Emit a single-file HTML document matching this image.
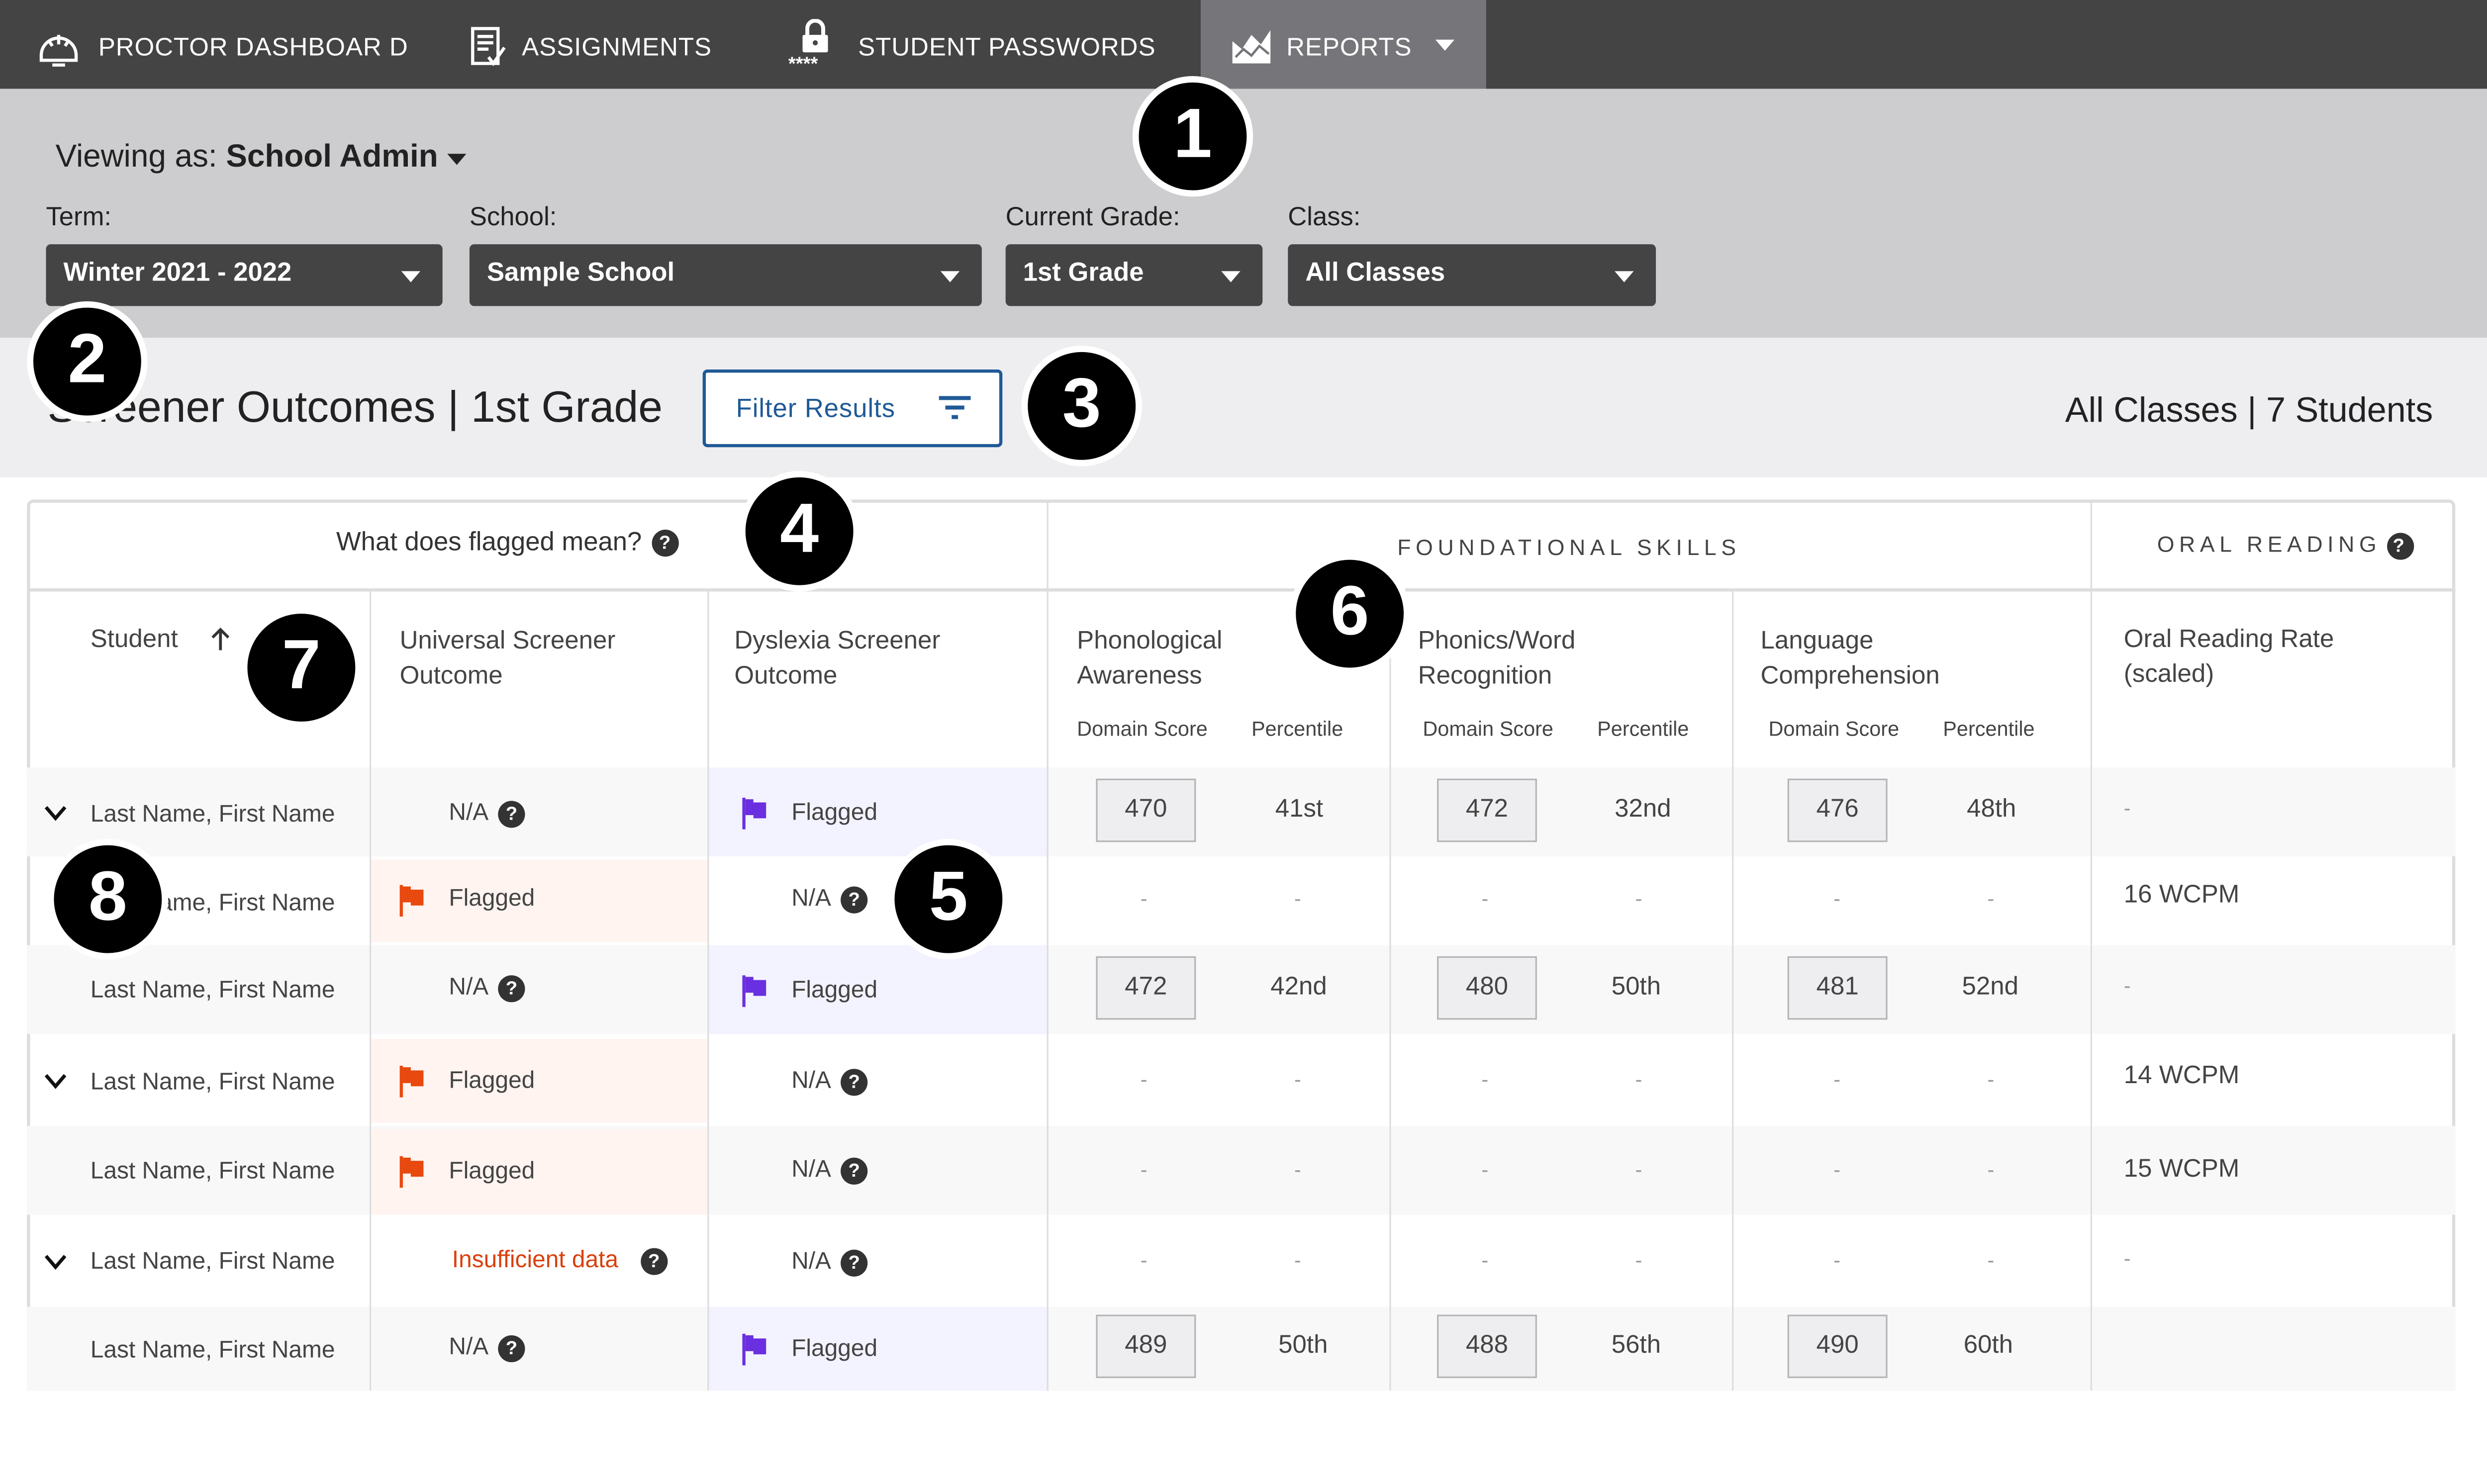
<!DOCTYPE html>
<html><head><meta charset="utf-8"><style>
*{margin:0;padding:0;box-sizing:border-box}
html,body{width:100vw;height:100vh;overflow:hidden;background:#fff}
#w{position:absolute;left:0;top:0;width:1568px;height:877px;overflow:hidden;transform:scale(3.4018);transform-origin:0 0;font-family:"Liberation Sans",sans-serif;color:#333;font-size:15px}
.a{position:absolute;white-space:nowrap}
.nav{left:0;top:0;width:1568px;height:56px;background:#444}
.nt{color:#fff;font-size:16px;top:22px;letter-spacing:.3px}
.dd{background:#444;border-radius:3px;height:39px;top:154px;color:#fff;font-weight:bold;font-size:16.5px;padding:9px 11px}
.dd:after{content:"";position:absolute;right:14px;top:17px;border:6px solid transparent;border-top:7px solid #fff}
.lbl{top:128px;font-size:16.5px;color:#222}
.c{width:76px;height:76px;border-radius:50%;background:#000;border:4px solid #fff;color:#fff;font-weight:bold;font-size:44px;text-align:center;line-height:66px;z-index:5}
.vl{width:1px;background:#ddd}
.hl{height:1px;background:#ddd}
.q{display:inline-block;width:17px;height:17px;border-radius:50%;background:#333;color:#fff;font-size:12px;font-weight:bold;text-align:center;line-height:17px;vertical-align:middle;margin-left:6px}
.sb{width:63px;height:40px;background:#eeeef0;border:1px solid #b5b5b8;text-align:center;line-height:38px;font-size:16px;color:#444}
.nm{font-size:15px;color:#444}
.fl{width:16px;height:20px}
.t16{font-size:16px;color:#444}
.dash{color:#999;font-size:13px}
</style></head><body><div id="w">
<div class="a nav"></div>
<div class="a" style="left:757px;top:0;width:180px;height:56px;background:#76767a"></div>
<svg class="a" style="left:22px;top:14px" width="30" height="30" viewBox="0 0 30 30"><path d="M4 21a11 11 0 1 1 22 0v3H4z" fill="none" stroke="#fff" stroke-width="2"/><path d="M15 8v6M9 12l2 3M21 12l-2 3" stroke="#fff" stroke-width="2"/><rect x="11" y="26" width="8" height="2" fill="#fff"/></svg>
<div class="a nt" style="left:62px">PROCTOR DASHBOAR D</div>
<svg class="a" style="left:296px;top:16px" width="24" height="28" viewBox="0 0 24 28"><path d="M2 2h16v22H2z" fill="none" stroke="#fff" stroke-width="2"/><path d="M5 7h10M5 11h10M5 15h7M12 20l3 4 7-10" fill="none" stroke="#fff" stroke-width="2"/></svg>
<div class="a nt" style="left:329px">ASSIGNMENTS</div>
<svg class="a" style="left:505px;top:12px" width="18" height="22" viewBox="0 0 18 22"><path d="M4 10V6a5 5 0 0 1 10 0v4" fill="none" stroke="#fff" stroke-width="2.5"/><rect x="1" y="10" width="16" height="11" rx="1" fill="#fff"/><circle cx="9" cy="15" r="1.6" fill="#444"/></svg>
<div class="a" style="left:497px;top:33px;color:#fff;font-size:12px;font-weight:bold">****</div>
<div class="a nt" style="left:541px">STUDENT PASSWORDS</div>
<svg class="a" style="left:776px;top:18px" width="26" height="22" viewBox="0 0 26 22"><path d="M1 22V8l6 5 6-9 6 6 6-9v21z" fill="#fff"/><path d="M3 18l5-5 5 4 5-6 6 5" fill="none" stroke="#76767a" stroke-width="1.5"/></svg>
<div class="a nt" style="left:811px">REPORTS</div>
<div class="a" style="left:905px;top:25px;border:6px solid transparent;border-top:7px solid #fff"></div>

<div class="a" style="left:0;top:56px;width:1568px;height:157px;background:#cdcdcf"></div>
<div class="a" style="left:35px;top:88px;font-size:20px;color:#222">Viewing as: <b>School Admin</b></div>
<div class="a" style="left:282px;top:97px;border:6px solid transparent;border-top:7px solid #222"></div>
<div class="a lbl" style="left:29px">Term:</div>
<div class="a lbl" style="left:296px">School:</div>
<div class="a lbl" style="left:634px">Current Grade:</div>
<div class="a lbl" style="left:812px">Class:</div>
<div class="a dd" style="left:29px;width:250px">Winter 2021 - 2022</div>
<div class="a dd" style="left:296px;width:323px">Sample School</div>
<div class="a dd" style="left:634px;width:162px">1st Grade</div>
<div class="a dd" style="left:812px;width:232px">All Classes</div>

<div class="a" style="left:0;top:213px;width:1568px;height:88px;background:#eeeef0"></div>
<div class="a" style="left:30px;top:241px;font-size:27.5px;color:#222">Screener Outcomes | 1st Grade</div>
<div class="a" style="left:443px;top:233px;width:189px;height:49px;border:2px solid #1f5a96;border-radius:3px;background:#fff;color:#1f5a96;font-size:16.5px;padding:14px 0 0 19px;letter-spacing:.3px">Filter Results</div>
<svg class="a" style="left:591px;top:249px" width="22" height="18" viewBox="0 0 22 18"><path d="M1 2h20M5 8h12M9 14h4" stroke="#1f5a96" stroke-width="2.5"/></svg>
<div class="a" style="left:1302px;top:246px;font-size:22px;color:#222">All Classes | 7 Students</div>

<!-- table -->
<div class="a" style="left:17px;top:315px;width:1531px;height:640px;border:2px solid #ddd;border-radius:4px"></div>
<div class="a hl" style="left:17px;top:371px;width:1531px;height:2px"></div>
<div class="a" style="left:17px;top:484px;width:1531px;height:56px;background:#f8f8f8"></div>
<div class="a" style="left:17px;top:596px;width:1531px;height:56px;background:#f8f8f8"></div>
<div class="a" style="left:17px;top:710px;width:1531px;height:56px;background:#f8f8f8"></div>
<div class="a" style="left:17px;top:824px;width:1531px;height:60px;background:#f8f8f8"></div>
<div class="a" style="left:234px;top:542px;width:212px;height:52px;background:#fff4f0"></div>
<div class="a" style="left:234px;top:655px;width:212px;height:53px;background:#fff4f0"></div>
<div class="a" style="left:234px;top:712px;width:212px;height:54px;background:#fff4f0"></div>
<div class="a" style="left:447px;top:484px;width:213px;height:56px;background:#f3f2ff"></div>
<div class="a" style="left:447px;top:596px;width:213px;height:56px;background:#f3f2ff"></div>
<div class="a" style="left:447px;top:824px;width:213px;height:60px;background:#f3f2ff"></div>
<div class="a vl" style="left:233px;top:372px;height:520px"></div>
<div class="a vl" style="left:446px;top:372px;height:520px"></div>
<div class="a vl" style="left:660px;top:316px;height:576px"></div>
<div class="a vl" style="left:876px;top:372px;height:520px"></div>
<div class="a vl" style="left:1092px;top:372px;height:520px"></div>
<div class="a vl" style="left:1318px;top:316px;height:576px"></div>

<div class="a" style="left:212px;top:333px;font-size:16.5px;color:#333">What does flagged mean?<span class="q">?</span></div>
<div class="a" style="left:881px;top:337px;font-size:14px;letter-spacing:3px;color:#444">FOUNDATIONAL SKILLS</div>
<div class="a" style="left:1360px;top:335px;font-size:14px;letter-spacing:3px;color:#444">ORAL READING<span class="q" style="margin-left:4px">?</span></div>

<div class="a t16" style="left:57px;top:395px">Student</div>
<svg class="a" style="left:132px;top:395px" width="14" height="16" viewBox="0 0 14 16"><path d="M7 15V2M2 7l5-5 5 5" fill="none" stroke="#333" stroke-width="1.8"/></svg>
<div class="a t16" style="left:252px;top:394px;line-height:22px">Universal Screener<br>Outcome</div>
<div class="a t16" style="left:463px;top:394px;line-height:22px">Dyslexia Screener<br>Outcome</div>
<div class="a t16" style="left:679px;top:394px;line-height:22px">Phonological<br>Awareness</div>
<div class="a t16" style="left:894px;top:394px;line-height:22px">Phonics/Word<br>Recognition</div>
<div class="a t16" style="left:1110px;top:394px;line-height:22px">Language<br>Comprehension</div>
<div class="a t16" style="left:1339px;top:393px;line-height:22px">Oral Reading Rate<br>(scaled)</div>
<div class="a" style="left:679px;top:452px;font-size:13px;color:#444">Domain Score</div>
<div class="a" style="left:789px;top:452px;font-size:13px;color:#444">Percentile</div>
<div class="a" style="left:897px;top:452px;font-size:13px;color:#444">Domain Score</div>
<div class="a" style="left:1007px;top:452px;font-size:13px;color:#444">Percentile</div>
<div class="a" style="left:1115px;top:452px;font-size:13px;color:#444">Domain Score</div>
<div class="a" style="left:1225px;top:452px;font-size:13px;color:#444">Percentile</div>

<!-- names -->
<svg class="a" style="left:28px;top:508px" width="14" height="10"><path d="M1 1l6 7 6-7" fill="none" stroke="#111" stroke-width="2.2"/></svg>
<svg class="a" style="left:28px;top:677px" width="14" height="10"><path d="M1 1l6 7 6-7" fill="none" stroke="#111" stroke-width="2.2"/></svg>
<svg class="a" style="left:28px;top:791px" width="14" height="10"><path d="M1 1l6 7 6-7" fill="none" stroke="#111" stroke-width="2.2"/></svg>
<div class="a nm" style="left:57px;top:505px">Last Name, First Name</div>
<div class="a nm" style="left:57px;top:561px">Last Name, First Name</div>
<div class="a nm" style="left:57px;top:616px">Last Name, First Name</div>
<div class="a nm" style="left:57px;top:674px">Last Name, First Name</div>
<div class="a nm" style="left:57px;top:730px">Last Name, First Name</div>
<div class="a nm" style="left:57px;top:787px">Last Name, First Name</div>
<div class="a nm" style="left:57px;top:843px">Last Name, First Name</div>

<!-- universal -->
<div class="a nm" style="left:283px;top:504px">N/A<span class="q">?</span></div>
<svg class="a fl" style="left:252px;top:558px" viewBox="0 0 16 20"><path d="M1 0v20" stroke="#e8490f" stroke-width="2"/><path d="M2 1h5v2h8v10H7v-2H2z" fill="#e8490f"/></svg>
<div class="a nm" style="left:283px;top:558px">Flagged</div>
<div class="a nm" style="left:283px;top:614px">N/A<span class="q">?</span></div>
<svg class="a fl" style="left:252px;top:672px" viewBox="0 0 16 20"><path d="M1 0v20" stroke="#e8490f" stroke-width="2"/><path d="M2 1h5v2h8v10H7v-2H2z" fill="#e8490f"/></svg>
<div class="a nm" style="left:283px;top:673px">Flagged</div>
<svg class="a fl" style="left:252px;top:729px" viewBox="0 0 16 20"><path d="M1 0v20" stroke="#e8490f" stroke-width="2"/><path d="M2 1h5v2h8v10H7v-2H2z" fill="#e8490f"/></svg>
<div class="a nm" style="left:283px;top:730px">Flagged</div>
<div class="a nm" style="left:285px;top:786px;color:#d9400c">Insufficient data<span class="q" style="margin-left:14px">?</span></div>
<div class="a nm" style="left:283px;top:841px">N/A<span class="q">?</span></div>

<!-- dyslexia -->
<svg class="a fl" style="left:468px;top:503px" viewBox="0 0 16 20"><path d="M1 0v20" stroke="#6a2fe0" stroke-width="2"/><path d="M2 1h5v2h8v10H7v-2H2z" fill="#6a2fe0"/></svg>
<div class="a nm" style="left:499px;top:504px">Flagged</div>
<div class="a nm" style="left:499px;top:558px">N/A<span class="q">?</span></div>
<svg class="a fl" style="left:468px;top:615px" viewBox="0 0 16 20"><path d="M1 0v20" stroke="#6a2fe0" stroke-width="2"/><path d="M2 1h5v2h8v10H7v-2H2z" fill="#6a2fe0"/></svg>
<div class="a nm" style="left:499px;top:616px">Flagged</div>
<div class="a nm" style="left:499px;top:673px">N/A<span class="q">?</span></div>
<div class="a nm" style="left:499px;top:729px">N/A<span class="q">?</span></div>
<div class="a nm" style="left:499px;top:787px">N/A<span class="q">?</span></div>
<svg class="a fl" style="left:468px;top:841px" viewBox="0 0 16 20"><path d="M1 0v20" stroke="#6a2fe0" stroke-width="2"/><path d="M2 1h5v2h8v10H7v-2H2z" fill="#6a2fe0"/></svg>
<div class="a nm" style="left:499px;top:842px">Flagged</div>

<!-- scores row1 -->
<div class="a sb" style="left:691px;top:491px">470</div><div class="a t16" style="left:804px;top:502px">41st</div>
<div class="a sb" style="left:906px;top:491px">472</div><div class="a t16" style="left:1018px;top:502px">32nd</div>
<div class="a sb" style="left:1127px;top:491px">476</div><div class="a t16" style="left:1240px;top:502px">48th</div>
<div class="a dash" style="left:1339px;top:502px">-</div>
<!-- row3 -->
<div class="a sb" style="left:691px;top:603px">472</div><div class="a t16" style="left:801px;top:614px">42nd</div>
<div class="a sb" style="left:906px;top:603px">480</div><div class="a t16" style="left:1016px;top:614px">50th</div>
<div class="a sb" style="left:1127px;top:603px">481</div><div class="a t16" style="left:1237px;top:614px">52nd</div>
<div class="a dash" style="left:1339px;top:614px">-</div>
<!-- row7 -->
<div class="a sb" style="left:691px;top:829px">489</div><div class="a t16" style="left:806px;top:840px">50th</div>
<div class="a sb" style="left:906px;top:829px">488</div><div class="a t16" style="left:1016px;top:840px">56th</div>
<div class="a sb" style="left:1127px;top:829px">490</div><div class="a t16" style="left:1238px;top:840px">60th</div>
<!-- dashes rows 2,4,5,6 -->
<div class="a dash" style="left:719px;top:559px">-</div><div class="a dash" style="left:816px;top:559px">-</div><div class="a dash" style="left:934px;top:559px">-</div><div class="a dash" style="left:1031px;top:559px">-</div><div class="a dash" style="left:1156px;top:559px">-</div><div class="a dash" style="left:1253px;top:559px">-</div>
<div class="a t16" style="left:1339px;top:556px">16 WCPM</div>
<div class="a dash" style="left:719px;top:673px">-</div><div class="a dash" style="left:816px;top:673px">-</div><div class="a dash" style="left:934px;top:673px">-</div><div class="a dash" style="left:1031px;top:673px">-</div><div class="a dash" style="left:1156px;top:673px">-</div><div class="a dash" style="left:1253px;top:673px">-</div>
<div class="a t16" style="left:1339px;top:670px">14 WCPM</div>
<div class="a dash" style="left:719px;top:730px">-</div><div class="a dash" style="left:816px;top:730px">-</div><div class="a dash" style="left:934px;top:730px">-</div><div class="a dash" style="left:1031px;top:730px">-</div><div class="a dash" style="left:1156px;top:730px">-</div><div class="a dash" style="left:1253px;top:730px">-</div>
<div class="a t16" style="left:1339px;top:729px">15 WCPM</div>
<div class="a dash" style="left:719px;top:787px">-</div><div class="a dash" style="left:816px;top:787px">-</div><div class="a dash" style="left:934px;top:787px">-</div><div class="a dash" style="left:1031px;top:787px">-</div><div class="a dash" style="left:1156px;top:787px">-</div><div class="a dash" style="left:1253px;top:787px">-</div>
<div class="a dash" style="left:1339px;top:786px">-</div>

<!-- callouts -->
<div class="a c" style="left:714px;top:48px">1</div>
<div class="a c" style="left:17px;top:190px">2</div>
<div class="a c" style="left:644px;top:218px">3</div>
<div class="a c" style="left:466px;top:297px">4</div>
<div class="a c" style="left:560px;top:529px">5</div>
<div class="a c" style="left:813px;top:349px">6</div>
<div class="a c" style="left:152px;top:383px">7</div>
<div class="a c" style="left:30px;top:529px">8</div>
</div>
<script>
(function(){var w=document.getElementById('w');var s=window.innerWidth/1568;if(s>0&&isFinite(s))w.style.transform='scale('+s+')';})();
</script>
</body></html>
